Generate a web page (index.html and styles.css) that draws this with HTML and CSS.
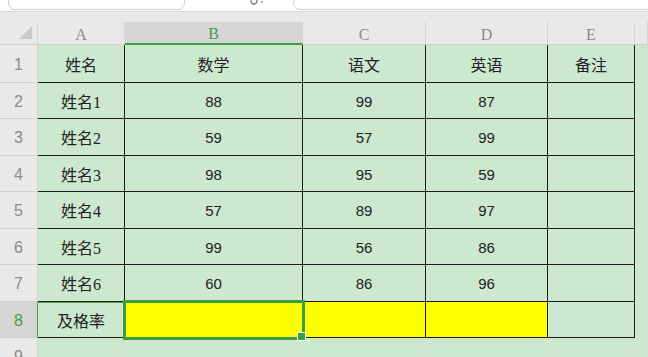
FILE: index.html
```html
<!DOCTYPE html>
<html>
<head>
<meta charset="utf-8">
<link rel="stylesheet" href="styles.css">
</head>
<body>
<div class="toolbar">
  <div class="namebox"></div>
  <div class="tool-icon">
    <svg width="16" height="8" viewBox="0 0 16 8"><path d="M2 0 Q2 4 5 4 Q8 4 8 0" fill="none" stroke="#777" stroke-width="1.3"/><circle cx="13" cy="2" r="0.9" fill="#888"/></svg>
  </div>
  <div class="formulabox"></div>
</div>
<div class="gap"></div>
<div class="sheet">
  <div class="hd corner"><svg width="14" height="14" viewBox="0 0 14 14"><polygon points="0,13 13,0 13,13" fill="#c9c9c9"/></svg></div>
  <div class="hd">A</div>
  <div class="hd sel">B</div>
  <div class="hd">C</div>
  <div class="hd">D</div>
  <div class="hd">E</div>
  <div class="hd"></div>

  <div class="rh">1</div>
  <div class="c cn">姓名</div>
  <div class="c cn">数学</div>
  <div class="c cn">语文</div>
  <div class="c cn">英语</div>
  <div class="c cn">备注</div>
  <div class="g"></div>

  <div class="rh">2</div>
  <div class="c cn">姓名1</div>
  <div class="c num">88</div>
  <div class="c num">99</div>
  <div class="c num">87</div>
  <div class="c"></div>
  <div class="g"></div>

  <div class="rh">3</div>
  <div class="c cn">姓名2</div>
  <div class="c num">59</div>
  <div class="c num">57</div>
  <div class="c num">99</div>
  <div class="c"></div>
  <div class="g"></div>

  <div class="rh">4</div>
  <div class="c cn">姓名3</div>
  <div class="c num">98</div>
  <div class="c num">95</div>
  <div class="c num">59</div>
  <div class="c"></div>
  <div class="g"></div>

  <div class="rh">5</div>
  <div class="c cn">姓名4</div>
  <div class="c num">57</div>
  <div class="c num">89</div>
  <div class="c num">97</div>
  <div class="c"></div>
  <div class="g"></div>

  <div class="rh">6</div>
  <div class="c cn">姓名5</div>
  <div class="c num">99</div>
  <div class="c num">56</div>
  <div class="c num">86</div>
  <div class="c"></div>
  <div class="g"></div>

  <div class="rh">7</div>
  <div class="c cn">姓名6</div>
  <div class="c num">60</div>
  <div class="c num">86</div>
  <div class="c num">96</div>
  <div class="c"></div>
  <div class="g"></div>

  <div class="rh rsel">8</div>
  <div class="c cn a8">及格率</div>
  <div class="c y active"></div>
  <div class="c y"></div>
  <div class="c y"></div>
  <div class="c"></div>
  <div class="g"></div>

  <div class="rh">9</div>
  <div class="g"></div>
  <div class="g"></div>
  <div class="g"></div>
  <div class="g"></div>
  <div class="g"></div>
  <div class="g"></div>
</div>
</body>
</html>
```

FILE: styles.css
```css
* { box-sizing: border-box; }
html, body { margin: 0; padding: 0; }
body {
  width: 648px;
  height: 357px;
  overflow: hidden;
  background: #cce8cf;
  font-family: "Liberation Sans", "Noto Sans CJK SC", sans-serif;
}
.toolbar {
  height: 12px;
  background: #ffffff;
  border-bottom: 1px solid #d9d9d9;
  display: flex;
  align-items: flex-end;
  overflow: hidden;
}
.namebox {
  margin-left: 8px;
  width: 177px;
  height: 30px;
  margin-bottom: 1px;
  border: 1px solid #cfcfcf;
  border-radius: 7px;
  background: #fff;
}
.tool-icon {
  align-self: flex-start;
  margin-left: 64px;
  width: 16px;
  height: 8px;
  line-height: 0;
}
.formulabox {
  margin-left: 28px;
  flex: 1;
  height: 30px;
  margin-bottom: 1px;
  margin-right: -20px;
  border: 1px solid #cfcfcf;
  border-radius: 7px;
  background: #fff;
}
.gap {
  height: 10px;
  background: #e9e9e9;
}
.sheet {
  display: grid;
  grid-template-columns: 38px 87px 178px 123px 122px 87px 1fr;
  grid-template-rows: 23px 38px 36px 37px 36px 37px 36px 37px 36px 36px;
}
.hd, .rh {
  background: #e9e9e9;
  color: #8a8a8a;
  border-right: 1px solid #d4d4d4;
  border-bottom: 1px solid #cfcfcf;
  display: flex;
  align-items: center;
  justify-content: center;
}
.hd {
  font-family: "Liberation Serif", serif;
  font-size: 16px;
  padding-top: 3px;
}
.corner {
  justify-content: flex-end;
  align-items: flex-end;
  padding: 0 4px 4px 0;
}
.hd.sel {
  background: #d6d6d6;
  color: #3f9f45;
  border-bottom: 2px solid #3f9f45;
}
.rh {
  font-family: "Liberation Sans", sans-serif;
  font-size: 16px;
  padding-top: 2px;
}
.rh.rsel {
  background: #d6d6d6;
  color: #3f9f45;
  border-right: 1px solid #3f9f45;
}
.c {
  background: #cce8cf;
  border-right: 1px solid #1f1f1f;
  border-bottom: 1px solid #1f1f1f;
  color: #222;
  display: flex;
  align-items: center;
  justify-content: center;
}
.cn {
  font-family: "Liberation Serif", "Noto Sans CJK SC", serif;
  font-size: 16px;
}
.num {
  font-family: "Liberation Sans", sans-serif;
  font-size: 15px;
  padding-top: 1px;
}
.a8 {
  box-shadow: inset 0 1px 0 #4aa24e;
}
.g {
  background: #cce8cf;
  border-right: 1px solid #dcdedc;
  border-bottom: 1px solid #dcdedc;
}
.y {
  background: #ffff00;
}
.active {
  position: relative;
  outline: 3px solid #3c9e42;
  outline-offset: -1px;
  z-index: 2;
}
.active::after {
  content: "";
  position: absolute;
  right: -4px;
  bottom: -4px;
  width: 7px;
  height: 7px;
  background: #3c9e42;
  border: 1px solid #ffffff;
}
```
